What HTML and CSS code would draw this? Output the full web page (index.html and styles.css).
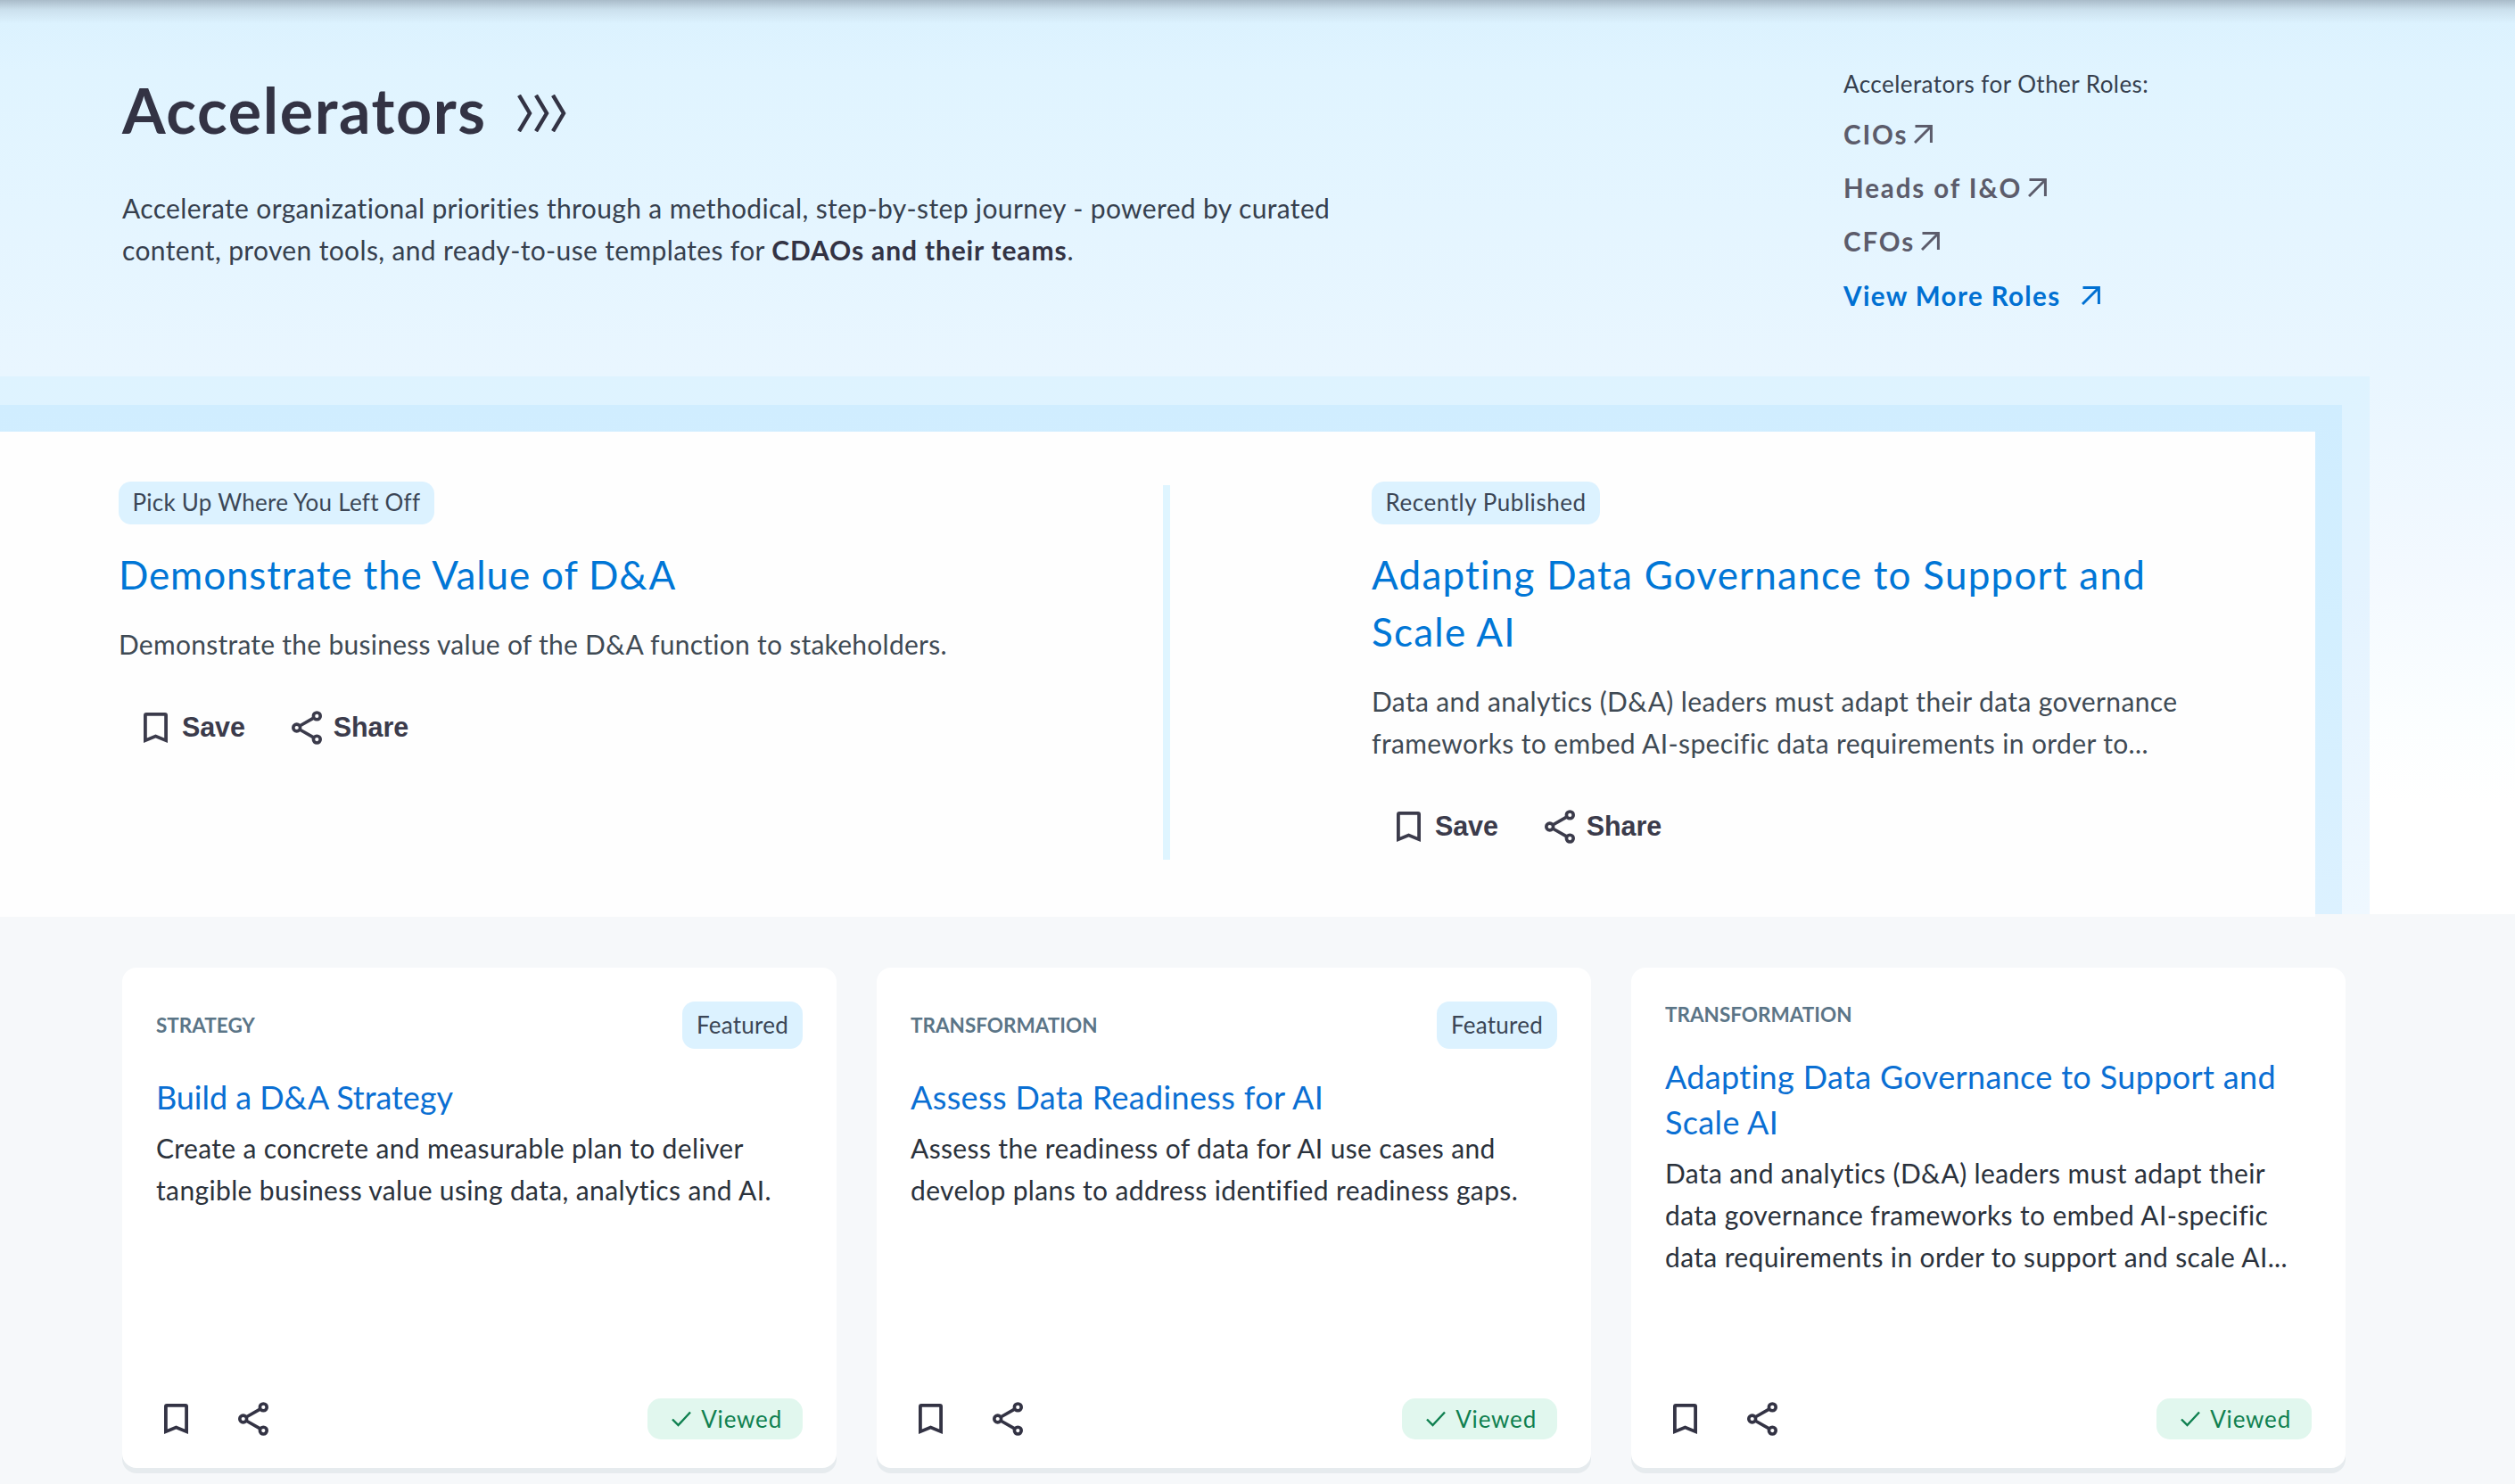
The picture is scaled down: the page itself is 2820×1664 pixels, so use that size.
FILE: index.html
```html
<!DOCTYPE html>
<html lang="en">
<head>
    <meta charset="UTF-8">
    <meta name="viewport" content="width=device-width, initial-scale=1.0">
    <title>Accelerators</title>
    <link rel="stylesheet" href="styles.css">
</head>
<body>
    <svg width="0" height="0" class="defs">
        <symbol id="bookmark" viewBox="0 0 27 34">
            <path fill="currentColor" fill-rule="evenodd" d="M0 34V3Q0 0 3 0H24Q27 0 27 3V34L13.5 28.6ZM3.8 28.4L13.5 24.4L23.2 28.4V3.8H3.8Z"/>
        </symbol>
        <symbol id="share" viewBox="0 0 34 38">
            <g fill="none" stroke="currentColor" stroke-width="3.6">
                <circle cx="28.3" cy="5.9" r="3.9"/>
                <circle cx="5.7" cy="19" r="3.9"/>
                <circle cx="28.3" cy="32.1" r="3.9"/>
                <path d="M9 17L25 7.9M9 21L25 30.1"/>
            </g>
        </symbol>
        <symbol id="arrow" viewBox="0 0 21 21">
            <path fill="none" stroke="currentColor" stroke-width="3" d="M1.5 1.6H19.4V20M19 2L1 20"/>
        </symbol>
        <symbol id="check" viewBox="0 0 22 18">
            <path fill="none" stroke="currentColor" stroke-width="2.4" d="M1 9.5L7.5 16L21 1.5"/>
        </symbol>
    </svg>

    <section class="hero">
        <header class="hero-top">
            <div class="intro">
                <h1>Accelerators
                    <svg class="chevrons" viewBox="0 0 56 42"><path fill="none" stroke="currentColor" stroke-width="4.4" d="M2 .8L14 21L2 41.2M21 .8L33 21L21 41.2M40 .8L52 21L40 41.2"/></svg>
                </h1>
                <p class="lead">Accelerate organizational priorities through a methodical, step-by-step journey - powered by curated<br>content, proven tools, and ready-to-use templates for <b>CDAOs and their teams</b>.</p>
            </div>
            <nav class="roles">
                <div class="roles-title">Accelerators for Other Roles:</div>
                <a>CIOs<svg><use href="#arrow"/></svg></a>
                <a>Heads of I&amp;O<svg><use href="#arrow"/></svg></a>
                <a>CFOs<svg><use href="#arrow"/></svg></a>
                <a class="more">View More Roles<svg><use href="#arrow"/></svg></a>
            </nav>
        </header>

        <div class="frame-outer">
            <div class="frame-inner">
                <div class="panel">
                    <article class="pick">
                        <span class="badge">Pick Up Where You Left Off</span>
                        <h2>Demonstrate the Value of D&amp;A</h2>
                        <p>Demonstrate the business value of the D&amp;A function to stakeholders.</p>
                        <div class="actions">
                            <button><svg class="bookmark"><use href="#bookmark"/></svg>Save</button>
                            <button><svg class="share"><use href="#share"/></svg>Share</button>
                        </div>
                    </article>
                    <div class="divider"></div>
                    <article class="pick recent">
                        <span class="badge">Recently Published</span>
                        <h2>Adapting Data Governance to Support and<br>Scale AI</h2>
                        <p>Data and analytics (D&amp;A) leaders must adapt their data governance<br>frameworks to embed AI-specific data requirements in order to...</p>
                        <div class="actions">
                            <button><svg class="bookmark"><use href="#bookmark"/></svg>Save</button>
                            <button><svg class="share"><use href="#share"/></svg>Share</button>
                        </div>
                    </article>
                </div>
            </div>
        </div>
    </section>

    <section class="cards">
        <article class="card">
            <div class="card-head"><span class="tag">STRATEGY</span><span class="badge featured">Featured</span></div>
            <h3 class="tight">Build a D&amp;A Strategy</h3>
            <p>Create a concrete and measurable plan to deliver<br>tangible business value using data, analytics and AI.</p>
            <div class="card-foot">
                <svg class="bookmark"><use href="#bookmark"/></svg>
                <svg class="share"><use href="#share"/></svg>
                <span class="viewed"><svg><use href="#check"/></svg>Viewed</span>
            </div>
        </article>
        <article class="card">
            <div class="card-head"><span class="tag">TRANSFORMATION</span><span class="badge featured">Featured</span></div>
            <h3>Assess Data Readiness for AI</h3>
            <p>Assess the readiness of data for AI use cases and<br>develop plans to address identified readiness gaps.</p>
            <div class="card-foot">
                <svg class="bookmark"><use href="#bookmark"/></svg>
                <svg class="share"><use href="#share"/></svg>
                <span class="viewed"><svg><use href="#check"/></svg>Viewed</span>
            </div>
        </article>
        <article class="card">
            <div class="card-head"><span class="tag">TRANSFORMATION</span></div>
            <h3>Adapting Data Governance to Support and<br>Scale AI</h3>
            <p>Data and analytics (D&amp;A) leaders must adapt their<br>data governance frameworks to embed AI-specific<br>data requirements in order to support and scale AI...</p>
            <div class="card-foot">
                <svg class="bookmark"><use href="#bookmark"/></svg>
                <svg class="share"><use href="#share"/></svg>
                <span class="viewed"><svg><use href="#check"/></svg>Viewed</span>
            </div>
        </article>
    </section>
</body>
</html>
```
FILE: styles.css
```css
* {
    box-sizing: border-box;
}
body {
    margin: 0;
    height: 1664px;
    overflow: hidden;
    background: #f6f8fa;
    font-family: Lato, "Open Sans", sans-serif;
    font-variant-ligatures: none;
    color: #333344;
    white-space: nowrap;
}
h1, h2, h3, p {
    margin: 0;
    font-weight: 400;
}
svg {
    display: block;
    flex: none;
}
.defs {
    position: absolute;
}

/* hero */
.hero {
    height: 1025px;
    background:
        linear-gradient(rgba(90, 100, 115, .38), rgba(90, 100, 115, .12) 11px, rgba(90, 100, 115, 0) 26px),
        linear-gradient(#daf1fe 0, #e0f4ff 80px, #e9f6ff 420px, #f3f9ff 640px, #fbfeff 800px, #fff 900px);
}
.hero-top {
    display: flex;
    height: 422px;
    padding-left: 137px;
}
.intro {
    width: 1930px;
    padding-top: 81px;
}
h1 {
    display: flex;
    gap: 34px;
    font-size: 70px;
    line-height: 84px;
    font-weight: 700;
    letter-spacing: 1.6px;
}
.chevrons {
    width: 56px;
    height: 42px;
    margin-top: 25px;
}
.lead {
    margin-top: 45px;
    font-size: 30px;
    line-height: 47px;
    letter-spacing: .36px;
    color: #36404e;
}
.lead b {
    letter-spacing: .85px;
    color: #333344;
}
.roles {
    padding-top: 76px;
}
.roles-title {
    margin-bottom: 8px;
    font-size: 26px;
    line-height: 36px;
    letter-spacing: .45px;
    color: #36404e;
}
.roles a {
    display: flex;
    align-items: center;
    gap: 7px;
    height: 60.4px;
    font-size: 29.5px;
    font-weight: 700;
    letter-spacing: 1.9px;
    color: #5c5c6b;
}
.roles a svg {
    width: 21px;
    height: 21px;
}
.roles .more {
    gap: 23px;
    letter-spacing: 1.4px;
    color: #0070d2;
}

/* framed panel */
.frame-outer {
    width: 2656.5px;
    height: 603px;
    padding: 31.5px 30.5px 0 0;
    background: linear-gradient(#def3ff, #e4f3ff 230px, #eff8ff);
}
.frame-inner {
    height: 571.5px;
    padding: 30.5px 30px 0 0;
    background: linear-gradient(#d0edff, #d3efff 250px, #dcf1ff);
}
.panel {
    display: flex;
    height: 544px;
    padding: 56px 0 0 133px;
    background: #fefefe;
}
.pick {
    display: flex;
    flex: none;
    flex-direction: column;
    align-items: flex-start;
    width: 1171px;
}
.recent {
    width: 920px;
}
.divider {
    flex: none;
    width: 8px;
    height: 420px;
    margin: 4px 226px 0 0;
    background: #dff5ff;
}
.badge {
    padding: 0 15.5px;
    border-radius: 14px;
    background: #dcf2ff;
    font-size: 26px;
    line-height: 47.5px;
    letter-spacing: .25px;
    color: #3b4656;
}
.recent .badge {
    letter-spacing: .55px;
}
h2 {
    margin-top: 24px;
    font-size: 44px;
    line-height: 64px;
    letter-spacing: .85px;
    color: #0076d6;
}
.recent h2 {
    letter-spacing: 1.22px;
}
.pick p {
    margin-top: 23px;
    font-size: 30px;
    line-height: 47px;
    letter-spacing: .26px;
    color: #3f4a54;
}
.recent p {
    letter-spacing: .37px;
}
.actions {
    display: flex;
    gap: 52px;
    margin-top: 39px;
    padding-left: 28px;
}
.actions button {
    display: flex;
    align-items: center;
    gap: 16px;
    height: 60px;
    padding: 2px 0 0;
    border: 0;
    background: none;
    font: 700 30.5px "Liberation Sans", Arial, sans-serif;
    letter-spacing: -.1px;
    color: #3b3b4b;
}
.actions button + button {
    gap: 13px;
}
.bookmark {
    width: 27px;
    height: 34px;
}
.share {
    width: 34px;
    height: 38px;
}

/* cards */
.cards {
    display: grid;
    grid-template-columns: repeat(3, 801px);
    gap: 45px;
    padding: 60px 0 0 137px;
}
.card {
    display: flex;
    flex-direction: column;
    height: 561px;
    padding: 38px 38px 32px;
    border-radius: 16px;
    background: #fff;
    box-shadow: 0 6px 0 #e6ebee;
}
.card-head {
    display: flex;
    align-items: center;
    justify-content: space-between;
}
.tag {
    font-size: 22.5px;
    line-height: 30px;
    font-weight: 700;
    color: #5b7587;
}
.featured {
    padding: 0 16px;
    line-height: 53px;
}
h3 {
    margin-top: 29px;
    font-size: 36px;
    line-height: 51px;
    letter-spacing: .35px;
    color: #0a6fd3;
}
.tight {
    letter-spacing: -.05px;
}
.card p {
    margin-top: 8px;
    font-size: 30px;
    line-height: 47px;
    letter-spacing: .36px;
    color: #2b323c;
}
.card-foot {
    display: flex;
    align-items: center;
    margin-top: auto;
    padding-left: 9px;
}
.card-foot .share {
    margin-left: 56px;
}
.viewed {
    display: flex;
    align-items: center;
    gap: 11px;
    margin-left: auto;
    padding: 0 23px 0 27px;
    border-radius: 15px;
    background: #e1f7ee;
    font-size: 26px;
    line-height: 46px;
    letter-spacing: .8px;
    color: #0f8050;
}
.viewed svg {
    width: 22px;
    height: 18px;
}
```
